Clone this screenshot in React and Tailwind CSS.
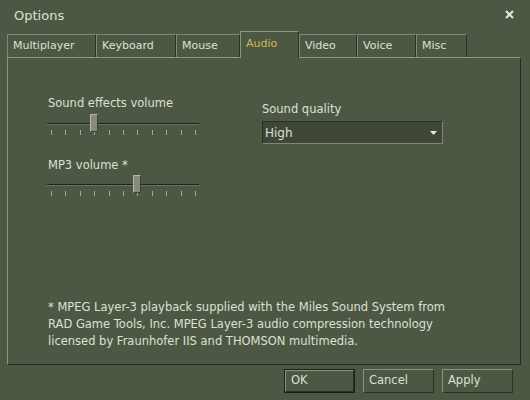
import React from "react";

const tabs = [
  { name: "Multiplayer", w: "w-[89px]" },
  { name: "Keyboard", w: "w-[80px]" },
  { name: "Mouse", w: "w-[64px]" },
  { name: "Audio", w: "w-[59px]", active: true },
  { name: "Video", w: "w-[58px]" },
  { name: "Voice", w: "w-[59px]" },
  { name: "Misc", w: "w-[51px]" },
];

const ticks = [0, 1, 2, 3, 4, 5, 6, 7, 8, 9, 10];

// VGUI style slider: dark track, gray thumb, tick marks below
const Slider = ({ pos }) => (
  <div className="relative w-[152px] h-[24px]">
    <div className="absolute left-0 right-0 top-[10px] h-[2px] bg-[#1e2419] border-b border-[#69745e]" />
    <div className="absolute top-[17px] left-[4px] right-[3px] flex justify-between">
      {ticks.map((t) => (
        <div key={t} className="w-px h-[5px] bg-[#a3ab97]" />
      ))}
    </div>
    <div
      className="absolute top-[1px] w-[8px] h-[18px] bg-[#878a7d] border-t border-l border-[#b2b5a8] border-r border-b border-r-[#3c4236] border-b-[#3c4236]"
      style={{ left: pos }}
    />
  </div>
);

const Button = ({ label, focused }) => (
  <div className={"w-[71px] h-[24px] " + (focused ? "border border-[#1b1f17]" : "")}>
    <div className="h-full flex items-center pl-[5px] border-t border-l border-[#8a9580] border-r border-b border-r-[#2b3225] border-b-[#2b3225]">
      {label}
    </div>
  </div>
);

export default function App() {
  return (
    <div
      className="w-[530px] h-[400px] bg-[#4c5844] text-[#dce0d4] text-[11.5px] flex flex-col overflow-hidden"
      style={{ fontFamily: '"DejaVu Sans", Verdana, sans-serif' }}
    >
      {/* title bar */}
      <div className="h-[31px] flex items-start justify-between pl-[14px] pr-[16px] pt-[7px]">
        <span className="text-[13px] leading-[18px]">Options</span>
        <svg width="9" height="9" viewBox="0 0 9 9" className="mt-[3px]">
          <path d="M1 1 L8 8 M8 1 L1 8" stroke="#e4e7df" strokeWidth="2" />
        </svg>
      </div>

      {/* tabs */}
      <div className="h-[26px] flex items-end pl-[7px] text-[11px]">
        {tabs.map((t) =>
          t.active ? (
            <div
              key={t.name}
              className={
                t.w +
                " h-[27px] -mb-px pl-[5px] pt-[4px] border-t border-l border-[#8d9882] border-r border-r-[#2a3024] text-[#c9b94f] relative z-10 bg-[#4c5844]"
              }
            >
              {t.name}
            </div>
          ) : (
            <div
              key={t.name}
              className={
                t.w +
                " h-[23px] pl-[5px] pt-[3px] border-t border-l border-[#7e8a72] border-r border-r-[#2a3024]"
              }
            >
              {t.name}
            </div>
          )
        )}
      </div>

      {/* panel */}
      <div className="ml-[7px] w-[514px] h-[308px] border-t border-l border-[#8d9882] border-r border-b border-r-[#262b21] border-b-[#262b21] flex flex-col">
        <div className="flex pt-[38px] pl-[39px]">
          <div className="w-[215px] flex flex-col">
            <div className="leading-[14px] pl-px">Sound effects volume</div>
            <div className="mt-[3px]">
              <Slider pos={43} />
            </div>
            <div className="leading-[14px] mt-[21px] pl-px">MP3 volume *</div>
            <div className="mt-[2px]">
              <Slider pos={86} />
            </div>
          </div>
          <div className="flex flex-col pt-[6px]">
            <div className="leading-[14px]">Sound quality</div>
            <div className="mt-[5px] w-[181px] h-[23px] bg-[#3e4737] border-t border-l border-[#2a3024] border-r border-b border-r-[#7d8972] border-b-[#7d8972] flex items-center justify-between pl-[2px] pr-[5px] text-[12px]">
              <span>High</span>
              <svg width="7" height="4" viewBox="0 0 7 4">
                <path d="M0 0 H7 L3.5 4 Z" fill="#e4e7df" />
              </svg>
            </div>
          </div>
        </div>

        <div className="mt-auto pl-[40px] pb-[14px] leading-[17px]">
          <div>* MPEG Layer-3 playback supplied with the Miles Sound System from</div>
          <div>RAD Game Tools, Inc. MPEG Layer-3 audio compression technology</div>
          <div>licensed by Fraunhofer IIS and THOMSON multimedia.</div>
        </div>
      </div>

      {/* buttons */}
      <div className="flex justify-end gap-[8px] pr-[17px] pt-[4px] text-[11.5px]">
        <Button label="OK" focused />
        <Button label="Cancel" />
        <Button label="Apply" />
      </div>
    </div>
  );
}
